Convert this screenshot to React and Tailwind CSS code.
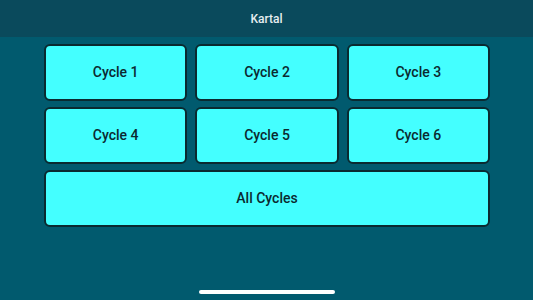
export default function App() {
  const cycles = ["Cycle 1", "Cycle 2", "Cycle 3", "Cycle 4", "Cycle 5", "Cycle 6"];

  return (
    <div
      className="w-[533px] h-[300px] bg-[#015a6e] flex flex-col relative overflow-hidden"
      style={{ fontFamily: 'Roboto, "Liberation Sans", Arial, sans-serif' }}
    >
      <div className="h-[37px] bg-[#0a4a5c] flex items-center justify-center text-[12px] font-medium text-[#e6eef0]">
        Kartal
      </div>

      <div className="pt-[7px] pl-[44px] w-[490px]">
        <div className="grid grid-cols-3 gap-x-[8px] gap-y-[6px]">
          {cycles.map((c) => (
            <button
              key={c}
              className="h-[57px] rounded-[6px] bg-[#44ffff] border-2 border-[#0a2a30] text-[14px] font-medium text-[#0b2a30] flex items-center justify-center"
            >
              {c}
            </button>
          ))}
          <button className="col-span-3 h-[57px] rounded-[6px] bg-[#44ffff] border-2 border-[#0a2a30] text-[14px] font-medium text-[#0b2a30] flex items-center justify-center">
            All Cycles
          </button>
        </div>
      </div>

      <div className="absolute left-[199px] top-[290px] w-[136px] h-[4px] rounded-full bg-white" />
    </div>
  );
}
